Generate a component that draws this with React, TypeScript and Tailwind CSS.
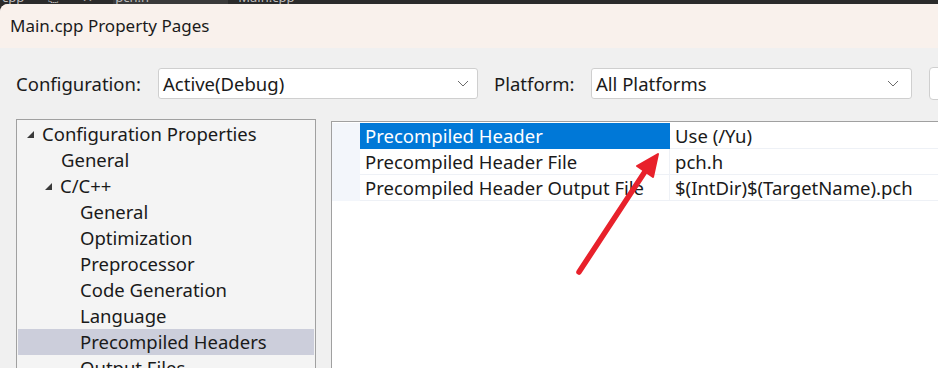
import React from "react";

const font = { fontFamily: '"Noto Sans", "Segoe UI", sans-serif' };

function Chevron() {
  return (
    <svg width="12" height="7" viewBox="0 0 12 7" className="shrink-0">
      <path d="M1 1 L6 6 L11 1" fill="none" stroke="#6b6b6b" strokeWidth="1" />
    </svg>
  );
}

function Tri() {
  return (
    <svg width="9" height="9" viewBox="0 0 9 9" className="shrink-0">
      <path d="M8 1 L8 8 L1 8 Z" fill="#3a3a3a" />
    </svg>
  );
}

const tree: { label: string; indent: number; arrow?: boolean; selected?: boolean }[] = [
  { label: "Configuration Properties", indent: 26, arrow: true },
  { label: "General", indent: 61 },
  { label: "C/C++", indent: 44, arrow: true },
  { label: "General", indent: 80 },
  { label: "Optimization", indent: 80 },
  { label: "Preprocessor", indent: 80 },
  { label: "Code Generation", indent: 80 },
  { label: "Language", indent: 80 },
  { label: "Precompiled Headers", indent: 80, selected: true },
  { label: "Output Files", indent: 80 },
];

const props = [
  { name: "Precompiled Header", value: "Use (/Yu)", sel: true },
  { name: "Precompiled Header File", value: "pch.h" },
  { name: "Precompiled Header Output File", value: "$(IntDir)$(TargetName).pch" },
];

export default function App() {
  return (
    <div className="relative w-[938px] h-[368px] overflow-hidden bg-[#2b2b2b] text-[#1a1a1a]" style={font}>
      {/* top strip of the editor tabs behind */}
      <div className="h-[4px] overflow-hidden flex text-[13px] text-[#bdbdbd] leading-[14px]">
        <div className="flex items-end h-[4px] gap-[24px] pl-[2px]">
          <span className="-mt-[10px]">cpp</span>
          <span className="-mt-[10px]">⎘</span>
          <span className="-mt-[10px]">✕</span>
        </div>
        <div className="ml-[20px] w-[115px] bg-[#3a3a3a] flex h-[4px] overflow-hidden">
          <span className="-mt-[10px] ml-[2px]">pch.h</span>
        </div>
        <div className="ml-[10px] flex h-[4px] overflow-hidden">
          <span className="-mt-[10px]">Main.cpp</span>
        </div>
      </div>

      <div className="rounded-tl-[8px] bg-[#f0f0f0] h-[364px] overflow-hidden">
        {/* title bar */}
        <div className="h-[44px] bg-[#f9f1ec] flex items-center pl-[10px] text-[17px] text-[#1b1b1b]">
          Main.cpp Property Pages
        </div>

        {/* config row */}
        <div className="flex items-center mt-[20px] h-[31px] text-[18.5px]">
          <div className="ml-[16px] w-[142px] shrink-0">Configuration:</div>
          <div className="w-[320px] shrink-0 h-[31px] bg-white border border-[#cfcfcf] rounded-[3px] flex items-center pl-[4px] pr-[8px] justify-between">
            <span>Active(Debug)</span>
            <Chevron />
          </div>
          <div className="ml-[16px] w-[97px] shrink-0">Platform:</div>
          <div className="w-[321px] shrink-0 h-[31px] bg-white border border-[#cfcfcf] rounded-[3px] flex items-center pl-[4px] pr-[12px] justify-between">
            <span>All Platforms</span>
            <Chevron />
          </div>
          <div className="ml-[17px] w-[40px] shrink-0 h-[33px] bg-white border border-[#cfcfcf] rounded-[4px]" />
        </div>

        {/* panels */}
        <div className="flex mt-[20px]">
          <div className="ml-[16px] w-[300px] shrink-0 h-[260px] border border-[#a0a0a0] bg-[#f4f4f4] p-[1px] text-[18.5px]">
            {tree.map((t, i) => (
              <div
                key={i}
                className={`h-[26px] flex items-center whitespace-nowrap ${t.selected ? "bg-[#cccedb]" : ""}`}
                style={{ paddingLeft: t.indent - 18 }}
              >
                {t.arrow && (
                  <span className="mr-[7px] mt-[1px]">
                    <Tri />
                  </span>
                )}
                <span>{t.label}</span>
              </div>
            ))}
          </div>

          <div className="ml-[15px] mt-[2px] flex-1 h-[260px] border-t border-l border-[#a0a0a0] bg-white pt-[1px] text-[18.5px]">
            {props.map((p, i) => (
              <div key={i} className="flex h-[26px] whitespace-nowrap">
                <div className="w-[28px] shrink-0 bg-[#f3f6fb]" />
                <div
                  className={`w-[310px] shrink-0 flex items-center pl-[5px] border-b border-r ${
                    p.sel ? "bg-[#0078d7] text-white border-[#0078d7]" : "border-[#eef1f6]"
                  }`}
                >
                  {p.name}
                </div>
                <div className="flex-1 flex items-center pl-[5px] border-b border-[#eef1f6]">{p.value}</div>
              </div>
            ))}
          </div>
        </div>
      </div>

      {/* red annotation arrow */}
      <svg className="absolute left-0 top-0 pointer-events-none" width="938" height="368">
        <line x1="579" y1="272" x2="646" y2="170" stroke="#e8212b" strokeWidth="5.5" strokeLinecap="round" />
        <path d="M658 154 L637 166 L653 177 Z" fill="#e8212b" stroke="#e8212b" strokeWidth="2" strokeLinejoin="round" />
      </svg>
    </div>
  );
}
